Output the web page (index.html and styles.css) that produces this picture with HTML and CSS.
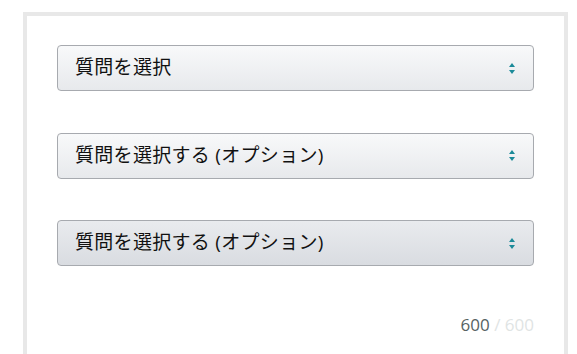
FILE: index.html
```html
<!DOCTYPE html>
<html lang="ja">
<head>
<meta charset="utf-8">
<link rel="stylesheet" href="styles.css">
</head>
<body>
<div class="card">
  <div class="field">
    <span class="label">質問を選択</span>
    <svg class="arrows" width="6" height="11" viewBox="0 0 6 11"><path d="M3 0 L6 4 L0 4 Z M0 7 L6 7 L3 11 Z" fill="#1b8a99"/></svg>
  </div>
  <div class="field">
    <span class="label">質問を選択する (オプション)</span>
    <svg class="arrows" width="6" height="11" viewBox="0 0 6 11"><path d="M3 0 L6 4 L0 4 Z M0 7 L6 7 L3 11 Z" fill="#1b8a99"/></svg>
  </div>
  <div class="field field-hover">
    <span class="label">質問を選択する (オプション)</span>
    <svg class="arrows" width="6" height="11" viewBox="0 0 6 11"><path d="M3 0 L6 4 L0 4 Z M0 7 L6 7 L3 11 Z" fill="#1b8a99"/></svg>
  </div>
  <div class="counter"><span class="count">600</span><span class="max"> / 600</span></div>
</div>
</body>
</html>
```
FILE: styles.css
```css
html, body {
  margin: 0;
  padding: 0;
  background: #ffffff;
}
body {
  padding: 12px 0 0 23px;
  overflow: hidden;
  height: 354px;
  box-sizing: border-box;
}
.card {
  width: 545px;
  box-sizing: border-box;
  border: 4px solid #e8e8e8;
  padding: 29px 30px 40px 30px;
  display: flex;
  flex-direction: column;
  gap: 41.5px;
  min-height: 400px;
}
.field {
  height: 46px;
  box-sizing: border-box;
  border: 1px solid #a7aaaf;
  border-radius: 4px;
  background: linear-gradient(#f8f9fa, #e7e9ec);
  display: flex;
  align-items: center;
  justify-content: space-between;
  padding: 0 18px 0 17px;
}
.field-hover {
  background: linear-gradient(#e9ebee, #d9dce1);
}
.label {
  font-family: "Open Sans", "Noto Sans CJK JP", sans-serif;
  font-size: 19px;
  color: #111111;
  letter-spacing: 0.3px;
  line-height: 1;
  margin-top: -1px;
}
.arrows {
  display: block;
}
.counter {
  margin-top: 7px;
  text-align: right;
  font-family: "Open Sans", sans-serif;
  font-size: 17px;
  line-height: 20px;
}
.count {
  color: #566262;
}
.max {
  color: #dfe4e4;
}
```
